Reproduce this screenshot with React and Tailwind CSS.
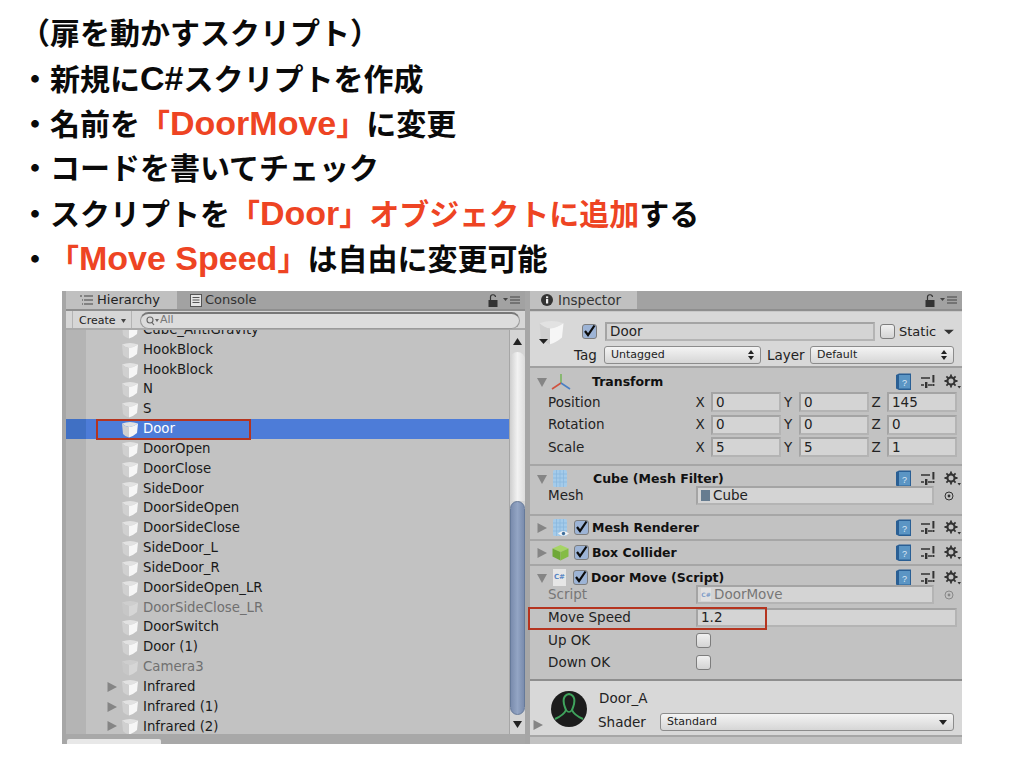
import { Fragment } from "react";

const hierarchyRows = [
  { name: "HookBlock" },
  { name: "HookBlock" },
  { name: "N" },
  { name: "S" },
  { name: "Door", selected: true },
  { name: "DoorOpen" },
  { name: "DoorClose" },
  { name: "SideDoor" },
  { name: "DoorSideOpen" },
  { name: "DoorSideClose" },
  { name: "SideDoor_L" },
  { name: "SideDoor_R" },
  { name: "DoorSideOpen_LR" },
  { name: "DoorSideClose_LR", dim: true },
  { name: "DoorSwitch" },
  { name: "Door (1)" },
  { name: "Camera3", dim: true },
  { name: "Infrared", arrow: true },
  { name: "Infrared (1)", arrow: true },
  { name: "Infrared (2)", arrow: true },
];

const transformRows = [
  { label: "Position", x: "0", y: "0", z: "145" },
  { label: "Rotation", x: "0", y: "0", z: "0" },
  { label: "Scale", x: "5", y: "5", z: "1" },
];

function Cube({ size = 18, dim = false }) {
  return (
    <svg width={size} height={size} viewBox="0 0 18 18" className={dim ? "shrink-0 opacity-40" : "shrink-0"}>
      <path d="M1 3.5 Q9 0.5 17 3.5 Q13 6.5 8 7 Q4 6.5 1 3.5 Z" fill="#e2e2e2" />
      <path d="M1 3.5 Q4 6.5 8 7 L8 17.5 Q4 16.5 2 14 Z" fill="#d0d0d0" />
      <path d="M8 7 Q13 6.5 17 3.5 L16 13 Q12 16.5 8 17.5 Z" fill="#f6f6f6" />
    </svg>
  );
}

function Triangle({ open = false, className = "" }) {
  return (
    <svg width="12" height="12" viewBox="0 0 12 12" className={`shrink-0 ${className}`}>
      {open ? <path d="M1 2 H11 L6 11 Z" fill="#858585" /> : <path d="M1.5 1 L11 6 L1.5 11 Z" fill="#858585" />}
    </svg>
  );
}

function LockMenu() {
  return (
    <div className="flex items-center gap-[5px]">
      <svg width="10" height="13" viewBox="0 0 10 13">
        <path d="M2.5 6 V3.5 A2.5 2.5 0 0 1 7.5 3 " fill="none" stroke="#333" strokeWidth="1.2" />
        <rect x="0.5" y="6" width="9" height="7" fill="#333" />
      </svg>
      <svg width="17" height="8" viewBox="0 0 17 8">
        <path d="M0 2 H5 L2.5 5 Z" fill="#444" />
        <path d="M7 1 H17 M7 4 H17 M7 7 H17" stroke="#444" strokeWidth="1.2" />
      </svg>
    </div>
  );
}

function ComponentIcons() {
  return (
    <div className="-mr-[4px] ml-auto flex items-center gap-[9px]">
      <svg width="17" height="18" viewBox="0 0 17 18" className="shrink-0">
        <path d="M1 2 L4 0.5 H16 V17 H4 L1 15.5 Z" fill="#2a5f94" />
        <rect x="4" y="2" width="11" height="13.5" fill="#5b95c4" />
        <text x="9.5" y="12.5" fontSize="9" fill="#dce8f4" textAnchor="middle" fontFamily="Liberation Sans, sans-serif">?</text>
      </svg>
      <svg width="14" height="15" viewBox="0 0 14 15" className="shrink-0">
        <path d="M0 4 H9 M0 11 H3 M7 11 H11" stroke="#333" strokeWidth="1.6" />
        <rect x="4" y="8" width="2.4" height="6" fill="#333" />
        <rect x="11.4" y="1" width="2" height="7.5" fill="#333" />
        <rect x="11.4" y="10" width="2" height="2" fill="#333" />
      </svg>
      <svg width="17" height="15" viewBox="0 0 17 15" className="shrink-0">
        <circle cx="7" cy="7" r="3.6" fill="none" stroke="#333" strokeWidth="2.2" />
        <path d="M7 0.5 V3 M7 11 V13.5 M0.5 7 H3 M11 7 H13.5 M2.4 2.4 L4.1 4.1 M9.9 9.9 L11.6 11.6 M2.4 11.6 L4.1 9.9 M9.9 4.1 L11.6 2.4" stroke="#333" strokeWidth="1.8" />
        <path d="M13.5 12 H17 L15.2 14.5 Z" fill="#333" />
      </svg>
    </div>
  );
}

function Check({ on = true, className = "" }) {
  return (
    <span
      className={`relative flex h-[15px] w-[15px] shrink-0 rounded-[3px] border border-[#7d7d7d] ${
        on ? "bg-[#9db4d6]" : "bg-gradient-to-b from-[#f0f0f0] to-[#d4d4d4]"
      } ${className}`}
    >
      {on && (
        <svg width="15" height="15" viewBox="0 0 15 15" className="absolute -left-px -top-[2px]">
          <path d="M3 8 L6 12 L12.5 2.5" fill="none" stroke="#0c0c0c" strokeWidth="2.2" />
        </svg>
      )}
    </span>
  );
}

function Field({ className = "", children }) {
  return (
    <div className={`flex items-center border-2 border-[#a4a4a4] border-b-[#b4b4b4] border-r-[#b4b4b4] bg-[#d4d4d4] pl-[3px] ${className}`}>
      {children}
    </div>
  );
}

function Select({ className = "", label, small }) {
  return (
    <div className={`flex h-[18px] items-center justify-between rounded-[3px] border border-[#8c8c8c] bg-gradient-to-b from-[#f4f4f4] to-[#d6d6d6] pl-[6px] pr-[6px] text-[11px] ${className}`}>
      <span>{label}</span>
      {small ? (
        <svg width="8" height="5" viewBox="0 0 8 5"><path d="M0 0 H8 L4 5 Z" fill="#222" /></svg>
      ) : (
        <svg width="6" height="10" viewBox="0 0 6 10"><path d="M3 0 L6 4 H0 Z M3 10 L0 6 H6 Z" fill="#222" /></svg>
      )}
    </div>
  );
}

function MeshIcon({ eye = false }) {
  return (
    <svg width="17" height="19" viewBox="0 0 17 19" className="shrink-0">
      <rect x="1" y="1" width="14" height="17" rx="1.5" fill="#a4cbea" />
      <path d="M1 5 H15 M1 9 H15 M1 13 H15 M4.5 1 V18 M8 1 V18 M11.5 1 V18" stroke="#88b6dc" strokeWidth="0.7" />
      {eye && (
        <Fragment>
          <path d="M6 15.5 Q11 10.5 17 15.5 Q11 20 6 15.5 Z" fill="#f4f4f4" />
          <circle cx="11.5" cy="15.5" r="1.7" fill="#3f6f9c" />
        </Fragment>
      )}
    </svg>
  );
}

function HeaderTitle({ children, className = "" }) {
  return <span className={`whitespace-nowrap pt-[2px] text-[12.5px] font-bold text-[#111] ${className}`}>{children}</span>;
}

function Hierarchy() {
  return (
    <div className="flex w-[459px] shrink-0 flex-col">
      <div className="flex h-[18px] items-center bg-[#a2a2a2] pr-[5px] text-[13px]">
        <div className="flex h-full w-[111px] items-center gap-[4px] bg-[#c0c0c0] pl-[14px] text-[#222]">
          <svg width="13" height="10" viewBox="0 0 13 10">
            <path d="M0 1 H2 M4 1 H13 M2 5 H3 M4 5 H13 M2 9 H3 M4 9 H13" stroke="#444" strokeWidth="1" />
          </svg>
          Hierarchy
        </div>
        <div className="flex h-full items-center gap-[3px] pl-[13px] text-[#333]">
          <svg width="12" height="13" viewBox="0 0 12 13">
            <rect x="0.5" y="0.5" width="11" height="12" fill="#e4e4e4" stroke="#555" />
            <path d="M2.5 3.5 H9.5 M2.5 6 H9.5 M2.5 8.5 H9.5" stroke="#555" />
          </svg>
          Console
        </div>
        <div className="ml-auto"><LockMenu /></div>
      </div>
      <div className="flex h-[21px] items-center border-b-2 border-t-2 border-b-[#aaaaaa] border-t-[#8e8e8e] bg-[#d6d6d6] pl-[6px] pr-[5px]">
        <div className="flex h-full w-[60px] items-center gap-[5px] border-x border-[#b4b4b4] pl-[6px] pt-[3px] text-[11px] text-[#222]">
          Create
          <svg width="5" height="4" viewBox="0 0 5 4"><path d="M0 0 H5 L2.5 4 Z" fill="#444" /></svg>
        </div>
        <div className="ml-[8px] mt-[1px] flex h-[17px] grow items-center rounded-full border border-[#9a9a9a] border-t-2 border-t-[#777] bg-[#dcdcdc] pl-[5px] text-[11px] text-[#777]">
          <svg width="14" height="10" viewBox="0 0 14 10">
            <circle cx="4" cy="4" r="3" fill="none" stroke="#666" strokeWidth="1.1" />
            <path d="M6 6.5 L8 9" stroke="#666" strokeWidth="1.2" />
            <path d="M9 3 H13 L11 6 Z" fill="#666" />
          </svg>
          All
        </div>
      </div>
      <div className="flex h-[405px] overflow-hidden bg-[#c2c2c2]">
        <div className="min-w-0 grow overflow-hidden">
          <HierarchyRow name="Cube_AntiGravity" clipped />
          {hierarchyRows.map((row, i) => (
            <HierarchyRow key={i} {...row} />
          ))}
        </div>
        <Scrollbar />
      </div>
      <div className="flex h-[10px] items-end bg-[#a8a8a8] pl-[1px]">
        <div className="h-[5px] w-[94px] rounded-t-[2px] bg-[#e8e8e8]" />
      </div>
    </div>
  );
}

function HierarchyRow({ name, selected, dim, arrow, clipped }) {
  return (
    <div
      className={`flex h-[19.83px] items-center text-[13.3px] ${clipped ? "-mt-[10px]" : ""} ${
        selected ? "bg-[#4d7cd8] text-white" : dim ? "text-[#707070]" : "text-[#1a1a1a]"
      }`}
    >
      <div className={`h-full w-[20px] shrink-0 ${selected ? "bg-[#4070c4]" : "bg-[#b4b4b4]"}`} />
      <div className="flex w-[35px] shrink-0 justify-end pr-[3px]">
        {arrow && <Triangle />}
      </div>
      <Cube dim={dim} />
      <span className="ml-[4px] whitespace-nowrap">{name}</span>
    </div>
  );
}

function Scrollbar() {
  return (
    <div className="flex w-[16px] shrink-0 flex-col border-l border-[#a6a6a6] bg-[#d4d4d4]">
      <div className="flex h-[22px] shrink-0 items-center justify-center">
        <svg width="9" height="7" viewBox="0 0 9 7"><path d="M4.5 0 L9 7 H0 Z" fill="#222" /></svg>
      </div>
      <div className="h-[149px] shrink-0 rounded-t-[8px] bg-gradient-to-r from-[#cfcfcf] via-[#f2f2f2] to-[#dcdcdc]" />
      <div className="h-[214px] shrink-0 rounded-[8px] border border-[#667a9a] bg-gradient-to-r from-[#7a8cad] via-[#93a5c4] to-[#7a8cad]" />
      <div className="flex grow items-center justify-center">
        <svg width="9" height="7" viewBox="0 0 9 7"><path d="M0 0 H9 L4.5 7 Z" fill="#222" /></svg>
      </div>
    </div>
  );
}

function Inspector() {
  return (
    <div className="flex min-w-0 grow flex-col text-[13.5px] text-[#222]">
      <div className="flex h-[18px] shrink-0 items-center bg-[#a2a2a2] pr-[5px]">
        <div className="flex h-full w-[107px] items-center gap-[5px] bg-[#c0c0c0] pl-[11px] text-[#333]">
          <svg width="12" height="12" viewBox="0 0 12 12">
            <circle cx="6" cy="6" r="6" fill="#333" />
            <rect x="5" y="5" width="2.2" height="4.5" fill="#eee" />
            <rect x="5" y="2.4" width="2.2" height="1.8" fill="#eee" />
          </svg>
          Inspector
        </div>
        <div className="ml-auto"><LockMenu /></div>
      </div>
      <div className="h-[3px] shrink-0 border-t-2 border-[#8e8e8e] bg-[#c8c8c8]" />
      <div className="flex h-[56px] shrink-0 flex-col gap-[5px] border-b-2 border-[#a0a0a0] bg-[#d8d8d8] pl-[8px] pr-[8px] pt-[10px]">
        <div className="flex h-[19px] items-center">
          <div className="relative h-[28px] w-[44px] shrink-0">
            <Cube size={27} />
            <svg width="9" height="5" viewBox="0 0 9 5" className="absolute bottom-[2px] left-[1px]">
              <path d="M0 0 H9 L4.5 5 Z" fill="#222" />
            </svg>
          </div>
          <Check />
          <Field className="ml-[8px] h-[19px] w-[270px] shrink-0">Door</Field>
          <Check on={false} className="ml-[5px]" />
          <span className="ml-[4px] text-[13px]">Static</span>
          <svg width="13" height="6" viewBox="0 0 13 6" className="ml-[8px]"><path d="M0 0 H13 L6.5 6 Z" fill="#333" /></svg>
        </div>
        <div className="flex h-[18px] items-center pl-[36px]">
          <span className="w-[30px]">Tag</span>
          <Select className="w-[157px]" label="Untagged" />
          <span className="ml-[6px] w-[43px]">Layer</span>
          <Select className="w-[144px]" label="Default" />
        </div>
      </div>

      <section className="h-[98px] shrink-0 border-b-2 border-[#a6a6a6] bg-[#c2c2c2] pl-[6px] pr-[5px] pt-[4px]">
        <div className="flex h-[19px] items-center">
          <Triangle open />
          <svg width="20" height="18" viewBox="0 0 20 18" className="ml-[3px] shrink-0">
            <path d="M10 10 V1" stroke="#6fb34f" strokeWidth="1.4" />
            <path d="M10 10 L1 16" stroke="#d0523f" strokeWidth="1.6" />
            <path d="M10 10 L19 16" stroke="#4a7fc4" strokeWidth="1.6" />
          </svg>
          <HeaderTitle className="ml-[21px]">Transform</HeaderTitle>
          <ComponentIcons />
        </div>
        <div className="flex flex-col gap-[2.5px] pt-[1px]">
          {transformRows.map((row) => (
            <div key={row.label} className="flex h-[20px] items-center">
              <span className="w-[158px] shrink-0 pl-[12px]">{row.label}</span>
              <XyzField axis="X" value={row.x} />
              <XyzField axis="Y" value={row.y} />
              <XyzField axis="Z" value={row.z} />
            </div>
          ))}
        </div>
      </section>

      <section className="h-[50px] shrink-0 border-b-2 border-[#a6a6a6] bg-[#c2c2c2] pl-[6px] pr-[5px] pt-[3px]">
        <div className="flex h-[19px] items-center">
          <Triangle open />
          <span className="ml-[4px]"><MeshIcon /></span>
          <HeaderTitle className="ml-[24px]">Cube (Mesh Filter)</HeaderTitle>
          <ComponentIcons />
        </div>
        <div className="-mt-[2px] flex h-[19px] items-center">
          <span className="w-[160px] pl-[12px]">Mesh</span>
          <Field className="h-[19px] w-[238px] shrink-0 gap-[3px]">
            <span className="h-[11px] w-[9px] bg-[#667c90]" />
            Cube
          </Field>
          <ObjectPicker />
        </div>
      </section>

      <section className="flex h-[25px] shrink-0 items-center border-b-2 border-[#a6a6a6] bg-[#c2c2c2] pl-[6px] pr-[5px]">
        <Triangle />
        <span className="ml-[4px]"><MeshIcon eye /></span>
        <Check className="ml-[5px]" />
        <HeaderTitle className="ml-[3px]">Mesh Renderer</HeaderTitle>
        <ComponentIcons />
      </section>

      <section className="flex h-[25px] shrink-0 items-center border-b-2 border-[#a6a6a6] bg-[#c2c2c2] pl-[6px] pr-[5px]">
        <Triangle />
        <svg width="17" height="17" viewBox="0 0 17 17" className="ml-[4px] shrink-0">
          <path d="M8.5 1 L16.5 4.5 L8.5 8 L0.5 4.5 Z" fill="#a6d465" />
          <path d="M0.5 4.5 L8.5 8 V16.5 L0.5 12.5 Z" fill="#6fa838" />
          <path d="M16.5 4.5 L8.5 8 V16.5 L16.5 12.5 Z" fill="#84bc45" />
        </svg>
        <Check className="ml-[5px]" />
        <HeaderTitle className="ml-[3px]">Box Collider</HeaderTitle>
        <ComponentIcons />
      </section>

      <section className="h-[115px] shrink-0 border-b-2 border-[#8e8e8e] bg-[#c2c2c2] pl-[6px] pr-[5px] pt-[2px]">
        <div className="flex h-[19px] items-center">
          <Triangle open />
          <span className="ml-[5px]"><ScriptIcon /></span>
          <Check className="ml-[7px]" />
          <HeaderTitle className="ml-[3px]">Door Move (Script)</HeaderTitle>
          <ComponentIcons />
        </div>
        <div className="-mt-[2px] flex h-[19px] items-center text-[#777]">
          <span className="w-[160px] pl-[12px]">Script</span>
          <Field className="h-[19px] w-[238px] shrink-0 gap-[3px]">
            <ScriptIcon small />
            DoorMove
          </Field>
          <ObjectPicker dim />
        </div>
        <div className="mt-[4px] flex h-[19px] items-center">
          <span className="w-[160px] pl-[12px]">Move Speed</span>
          <Field className="h-[19px] w-[261px] shrink-0">1.2</Field>
        </div>
        <div className="mt-[3px] flex h-[20px] items-center">
          <span className="w-[160px] pl-[12px]">Up OK</span>
          <Check on={false} />
        </div>
        <div className="mt-[2px] flex h-[20px] items-center">
          <span className="w-[160px] pl-[12px]">Down OK</span>
          <Check on={false} />
        </div>
      </section>

      <section className="relative flex h-[56px] shrink-0 border-b-2 border-[#a6a6a6] bg-[#d8d8d8] pl-[20px] pr-[8px] pt-[9px]">
        <svg width="38" height="38" viewBox="0 0 38 38" className="shrink-0">
          <circle cx="19" cy="19" r="18" fill="#1c1c1c" />
          <path d="M5 29 Q14 25 16 20 Q10 6 19 4 Q28 6 22 20 Q24 25 33 29" fill="none" stroke="#3fa35c" strokeWidth="2" />
          <path d="M16 20 Q19 24 22 20" fill="none" stroke="#3fa35c" strokeWidth="1.6" />
        </svg>
        <Triangle className="absolute bottom-[4px] left-[2px]" />
        <div className="ml-[10px] flex grow flex-col">
          <span className="ml-[1px] -mt-[1px] leading-[18px]">Door_A</span>
          <div className="mt-[5px] flex items-center">
            <span className="w-[62px]">Shader</span>
            <Select className="grow" label="Standard" small />
          </div>
        </div>
      </section>
      <div className="grow bg-[#c2c2c2]" />
    </div>
  );
}

function XyzField({ axis, value }) {
  return (
    <Fragment>
      <span className="w-[12px] shrink-0 text-center">{axis}</span>
      <Field className="ml-[5px] mr-[1px] h-[20px] w-[70px] shrink-0">{value}</Field>
    </Fragment>
  );
}

function ObjectPicker({ dim = false }) {
  return (
    <svg width="10" height="10" viewBox="0 0 10 10" className="ml-[10px]">
      <circle cx="5" cy="5" r="4" fill="none" stroke={dim ? "#888" : "#333"} />
      <circle cx="5" cy="5" r="1.4" fill={dim ? "#888" : "#333"} />
    </svg>
  );
}

function ScriptIcon({ small = false }) {
  return (
    <span
      className={`flex shrink-0 items-center justify-center bg-[#e6e6e6] font-bold text-[#5a86c4] ${
        small ? "h-[13px] w-[10px] text-[6px] opacity-70" : "h-[17px] w-[13px] text-[7px]"
      }`}
    >
      C#
    </span>
  );
}

function Latin({ children }) {
  return <span className="text-[34px]">{children}</span>;
}

export default function App() {
  return (
    <div className="h-[768px] w-[1024px] overflow-hidden bg-white">
      <div className="pl-[20px] pt-[11px] text-[30px] font-bold leading-[45px] text-[#0a0a0a] [font-family:'Liberation_Sans','Noto_Sans_CJK_JP',sans-serif]">
        <p className="h-[45px]">（扉を動かすスクリプト）</p>
        <p className="h-[45px]">・新規に<Latin>C#</Latin>スクリプトを作成</p>
        <p className="h-[45px]">・名前を<span className="text-[#ee4423]">「<Latin>DoorMove</Latin>」</span>に変更</p>
        <p className="h-[45px]">・コードを書いてチェック</p>
        <p className="h-[45px]">・スクリプトを<span className="text-[#ee4423]">「<Latin>Door</Latin>」オブジェクトに追加</span>する</p>
        <p className="h-[45px]">・<span className="ml-[14px] text-[#ee4423]">「<Latin>Move Speed</Latin>」</span>は自由に変更可能</p>
      </div>
      <div className="relative ml-[62px] mt-[10px] flex h-[453px] w-[900px] border-l-4 border-[#a6a6a6] bg-[#a6a6a6] [font-family:'DejaVu_Sans',sans-serif]">
        <Hierarchy />
        <div className="w-[5px] shrink-0 bg-[#a6a6a6]" />
        <Inspector />
        <div className="pointer-events-none absolute left-[30px] top-[128px] h-[21px] w-[155px] border-2 border-[#b5341f]" />
        <div className="pointer-events-none absolute left-[462px] top-[316px] h-[23px] w-[239px] border-2 border-[#b5341f]" />
      </div>
    </div>
  );
}
